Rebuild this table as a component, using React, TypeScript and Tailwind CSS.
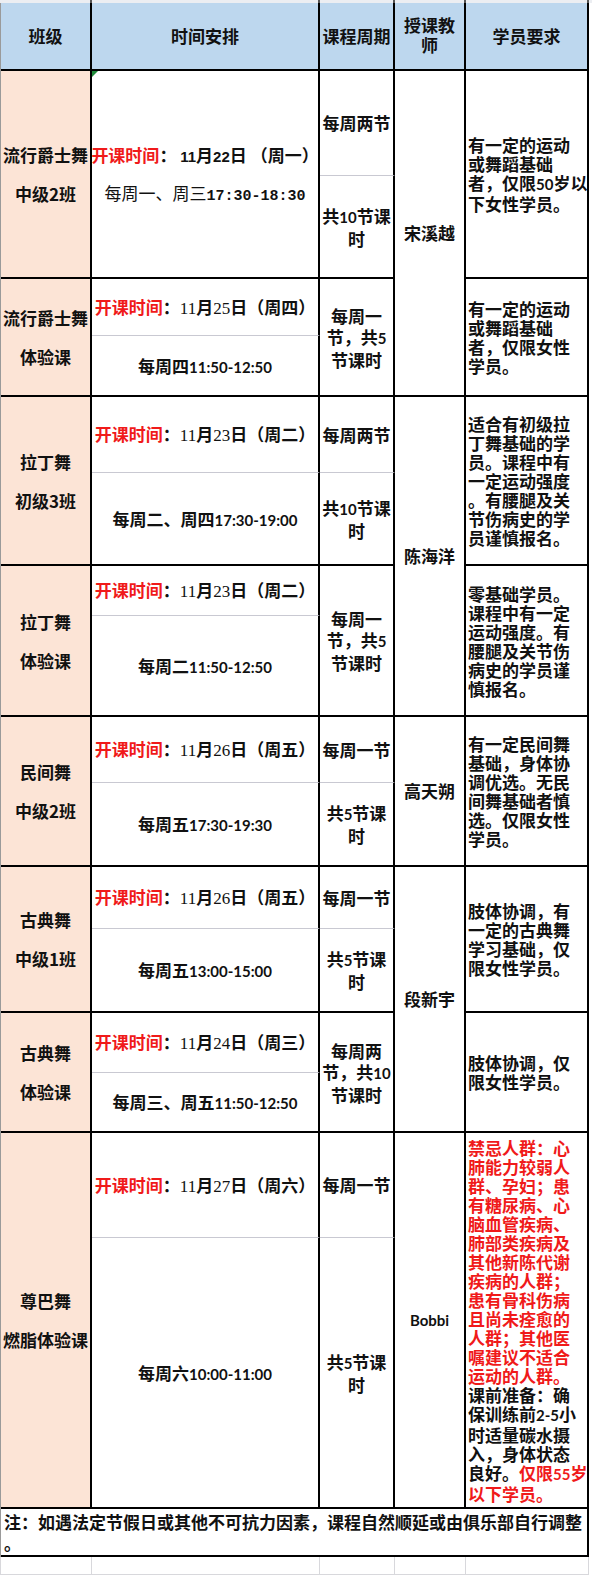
import React from "react";

const CJK = "font-['Noto_Sans_CJK_SC',sans-serif]";

function R({ children }: { children: React.ReactNode }) {
  return <span className="text-[#f01a1a]">{children}</span>;
}

function N({ children }: { children: React.ReactNode }) {
  return <span className="font-['Lato',sans-serif] text-[15px] font-bold">{children}</span>;
}

function S({ children }: { children: React.ReactNode }) {
  return <span className="font-['Liberation_Serif',serif] text-[17px] font-normal">{children}</span>;
}

function M({ children }: { children: React.ReactNode }) {
  return <span className="font-['Liberation_Mono',monospace] text-[15px] font-bold">{children}</span>;
}

function Lines({ lines, className = "" }: { lines: React.ReactNode[]; className?: string }) {
  return (
    <div className={className}>
      {lines.map((l, i) => (
        <div key={i} className="whitespace-nowrap">
          {l}
        </div>
      ))}
    </div>
  );
}

const base = "flex flex-col items-center justify-center text-center border-r-2 border-r-black";
const endRow = "border-b-2 border-b-black";
const subRow = "border-b border-b-[#c9c9d2]";

function ClassCell({ pos, a, b }: { pos: string; a: React.ReactNode; b: React.ReactNode }) {
  return (
    <div className={`${base} ${endRow} ${pos} col-start-1 bg-[#fce4d6] gap-[20px] leading-[19px]`}>
      <div className="whitespace-nowrap">{a}</div>
      <div className="whitespace-nowrap">{b}</div>
    </div>
  );
}

function Start({ date, wk }: { date: React.ReactNode; wk: string }) {
  return (
    <div className="whitespace-nowrap leading-[19px]">
      <R>开课时间</R>：{date}（{wk}）
    </div>
  );
}

function Req({ pos, lines }: { pos: string; lines: React.ReactNode[] }) {
  return (
    <div className={`flex flex-col justify-center items-start text-left pl-[2px] border-r-2 border-r-black ${endRow} ${pos} col-start-5 leading-[19px]`}>
      {lines.map((l, i) => (
        <div key={i} className="whitespace-nowrap">
          {l}
        </div>
      ))}
    </div>
  );
}

export default function App() {
  return (
    <div className={`w-[592px] h-[1575px] bg-white text-[17px] font-bold text-[#111] overflow-hidden ${CJK}`}>
      {/* top strip */}
      <div className="h-[3px] grid grid-cols-[92px_228px_75px_71px_123px] bg-[#eceef2]">
        <div className="border-r-2 border-r-[#555]" />
        <div className="border-r-2 border-r-[#555]" />
        <div className="border-r-2 border-r-[#555]" />
        <div className="border-r-2 border-r-[#555]" />
        <div className="border-r-2 border-r-[#555]" />
      </div>

      <div className="w-[589px] border-l border-l-[#9a9a9a] grid grid-cols-[91px_228px_75px_71px_123px] grid-rows-[68px_105px_103px_57px_61px_76px_93px_50px_101px_66px_84px_62px_84px_60px_60px_105px_271px_48px]">
        {/* header */}
        <div className={`${base} ${endRow} row-start-1 col-start-1 bg-[#bdd7ee]`}>班级</div>
        <div className={`${base} ${endRow} row-start-1 col-start-2 bg-[#bdd7ee]`}>时间安排</div>
        <div className={`${base} ${endRow} row-start-1 col-start-3 bg-[#bdd7ee] whitespace-nowrap`}>课程周期</div>
        <div className={`${base} ${endRow} row-start-1 col-start-4 bg-[#bdd7ee] leading-[20px] pb-[2px]`}>
          <div>授课教</div>
          <div>师</div>
        </div>
        <div className={`${base} ${endRow} row-start-1 col-start-5 bg-[#bdd7ee]`}>学员要求</div>

        {/* class column */}
        <ClassCell pos="row-start-2 row-span-2" a="流行爵士舞" b="中级2班" />
        <ClassCell pos="row-start-4 row-span-2" a="流行爵士舞" b="体验课" />
        <ClassCell pos="row-start-6 row-span-2" a="拉丁舞" b="初级3班" />
        <ClassCell pos="row-start-8 row-span-2" a="拉丁舞" b="体验课" />
        <ClassCell pos="row-start-10 row-span-2" a="民间舞" b="中级2班" />
        <ClassCell pos="row-start-12 row-span-2" a="古典舞" b="中级1班" />
        <ClassCell pos="row-start-14 row-span-2" a="古典舞" b="体验课" />
        <ClassCell pos="row-start-16 row-span-2" a="尊巴舞" b="燃脂体验课" />

        {/* time column */}
        <div className={`${base} ${endRow} row-start-2 row-span-2 col-start-2 relative gap-[17px] leading-[19px]`}>
          <div className="absolute left-0 top-0 w-0 h-0 border-t-[6px] border-t-[#1f8a3a] border-r-[6px] border-r-transparent" />
          <div className="whitespace-nowrap pt-[2px]">
            <R>开课时间</R>： <span className="font-['Liberation_Sans',sans-serif] text-[15px] font-bold">11</span>月<span className="font-['Liberation_Sans',sans-serif] text-[15px] font-bold">22</span>日 （周一）
          </div>
          <div className="whitespace-nowrap font-normal">
            每周一、周三<M>17:30-18:30</M>
          </div>
        </div>

        <div className={`${base} ${subRow} row-start-4 col-start-2`}>
          <Start date={<><S>11</S>月<S>25</S>日</>} wk="周四" />
        </div>
        <div className={`${base} ${endRow} row-start-5 col-start-2`}>
          <div className="whitespace-nowrap">每周四<N>11:50-12:50</N></div>
        </div>

        <div className={`${base} ${subRow} row-start-6 col-start-2`}>
          <Start date={<><S>11</S>月<S>23</S>日</>} wk="周二" />
        </div>
        <div className={`${base} ${endRow} row-start-7 col-start-2`}>
          <div className="whitespace-nowrap">每周二、周四<N>17:30-19:00</N></div>
        </div>

        <div className={`${base} ${subRow} row-start-8 col-start-2`}>
          <Start date={<><S>11</S>月<S>23</S>日</>} wk="周二" />
        </div>
        <div className={`${base} ${endRow} row-start-9 col-start-2`}>
          <div className="whitespace-nowrap">每周二<N>11:50-12:50</N></div>
        </div>

        <div className={`${base} ${subRow} row-start-10 col-start-2`}>
          <Start date={<><S>11</S>月<S>26</S>日</>} wk="周五" />
        </div>
        <div className={`${base} ${endRow} row-start-11 col-start-2`}>
          <div className="whitespace-nowrap">每周五<N>17:30-19:30</N></div>
        </div>

        <div className={`${base} ${subRow} row-start-12 col-start-2`}>
          <Start date={<><S>11</S>月<S>26</S>日</>} wk="周五" />
        </div>
        <div className={`${base} ${endRow} row-start-13 col-start-2`}>
          <div className="whitespace-nowrap">每周五<N>13:00-15:00</N></div>
        </div>

        <div className={`${base} ${subRow} row-start-14 col-start-2`}>
          <Start date={<><S>11</S>月<S>24</S>日</>} wk="周三" />
        </div>
        <div className={`${base} ${endRow} row-start-15 col-start-2`}>
          <div className="whitespace-nowrap">每周三、周五<N>11:50-12:50</N></div>
        </div>

        <div className={`${base} ${subRow} row-start-16 col-start-2`}>
          <Start date={<><S>11</S>月<S>27</S>日</>} wk="周六" />
        </div>
        <div className={`${base} ${endRow} row-start-17 col-start-2`}>
          <div className="whitespace-nowrap">每周六<N>10:00-11:00</N></div>
        </div>

        {/* period column */}
        <div className={`${base} ${subRow} row-start-2 col-start-3`}>每周两节</div>
        <div className={`${base} ${endRow} row-start-3 col-start-3 leading-[21px]`}>
          <Lines lines={[<>共<N>10</N>节课</>, "时"]} />
        </div>
        <div className={`${base} ${endRow} row-start-4 row-span-2 col-start-3 leading-[21px]`}>
          <Lines lines={["每周一", <>节，共<N>5</N></>, "节课时"]} />
        </div>
        <div className={`${base} ${subRow} row-start-6 col-start-3`}>每周两节</div>
        <div className={`${base} ${endRow} row-start-7 col-start-3 leading-[21px]`}>
          <Lines lines={[<>共<N>10</N>节课</>, "时"]} />
        </div>
        <div className={`${base} ${endRow} row-start-8 row-span-2 col-start-3 leading-[21px]`}>
          <Lines lines={["每周一", <>节，共<N>5</N></>, "节课时"]} />
        </div>
        <div className={`${base} ${subRow} row-start-10 col-start-3`}>每周一节</div>
        <div className={`${base} ${endRow} row-start-11 col-start-3 leading-[21px]`}>
          <Lines lines={[<>共<N>5</N>节课</>, "时"]} />
        </div>
        <div className={`${base} ${subRow} row-start-12 col-start-3`}>每周一节</div>
        <div className={`${base} ${endRow} row-start-13 col-start-3 leading-[21px]`}>
          <Lines lines={[<>共<N>5</N>节课</>, "时"]} />
        </div>
        <div className={`${base} ${endRow} row-start-14 row-span-2 col-start-3 leading-[21px]`}>
          <Lines lines={["每周两", <>节，共<N>10</N></>, "节课时"]} />
        </div>
        <div className={`${base} ${subRow} row-start-16 col-start-3`}>每周一节</div>
        <div className={`${base} ${endRow} row-start-17 col-start-3 leading-[21px]`}>
          <Lines lines={[<>共<N>5</N>节课</>, "时"]} />
        </div>

        {/* teacher column */}
        <div className={`${base} ${endRow} row-start-2 row-span-4 col-start-4`}>宋溪越</div>
        <div className={`${base} ${endRow} row-start-6 row-span-4 col-start-4`}>陈海洋</div>
        <div className={`${base} ${endRow} row-start-10 row-span-2 col-start-4`}>高天朔</div>
        <div className={`${base} ${endRow} row-start-12 row-span-4 col-start-4`}>段新宇</div>
        <div className={`${base} ${endRow} row-start-16 row-span-2 col-start-4`}>
          <span className="font-['Lato',sans-serif] text-[15px] font-bold">Bobbi</span>
        </div>

        {/* requirements column */}
        <Req pos="row-start-2 row-span-2" lines={["有一定的运动", "或舞蹈基础", <>者，仅限<N>50</N>岁以</>, "下女性学员。"]} />
        <Req pos="row-start-4 row-span-2" lines={["有一定的运动", "或舞蹈基础", "者，仅限女性", "学员。"]} />
        <Req
          pos="row-start-6 row-span-2"
          lines={["适合有初级拉", "丁舞基础的学", "员。课程中有", "一定运动强度", "。有腰腿及关", "节伤病史的学", "员谨慎报名。"]}
        />
        <Req pos="row-start-8 row-span-2" lines={["零基础学员。", "课程中有一定", "运动强度。有", "腰腿及关节伤", "病史的学员谨", "慎报名。"]} />
        <Req pos="row-start-10 row-span-2" lines={["有一定民间舞", "基础，身体协", "调优选。无民", "间舞基础者慎", "选。仅限女性", "学员。"]} />
        <Req pos="row-start-12 row-span-2" lines={["肢体协调，有", "一定的古典舞", "学习基础，仅", "限女性学员。"]} />
        <Req pos="row-start-14 row-span-2" lines={["肢体协调，仅", "限女性学员。"]} />
        <Req
          pos="row-start-16 row-span-2"
          lines={[
            <R>禁忌人群：心</R>,
            <R>肺能力较弱人</R>,
            <R>群、孕妇；患</R>,
            <R>有糖尿病、心</R>,
            <R>脑血管疾病、</R>,
            <R>肺部类疾病及</R>,
            <R>其他新陈代谢</R>,
            <R>疾病的人群；</R>,
            <R>患有骨科伤病</R>,
            <R>且尚未痊愈的</R>,
            <R>人群；其他医</R>,
            <R>嘱建议不适合</R>,
            <R>运动的人群。</R>,
            "课前准备：确",
            <>保训练前<N>2-5</N>小</>,
            "时适量碳水摄",
            "入，身体状态",
            <>良好。<R>仅限<N>55</N>岁</R></>,
            <R>以下学员。</R>,
          ]}
        />

        {/* footer */}
        <div className={`row-start-18 col-start-1 col-span-5 flex flex-col justify-center items-start text-left pl-[3px] leading-[21px] border-r-2 border-r-black ${endRow}`}>
          <div className="whitespace-nowrap">注：如遇法定节假日或其他不可抗力因素，课程自然顺延或由俱乐部自行调整</div>
          <div>。</div>
        </div>
      </div>

      {/* bottom strip */}
      <div className="h-[18px] grid grid-cols-[92px_228px_75px_71px_123px]">
        <div className="border-r border-r-[#d8d8dc] border-b border-b-[#d8d8dc] border-l border-l-[#d8d8dc]" />
        <div className="border-r border-r-[#d8d8dc] border-b border-b-[#d8d8dc]" />
        <div className="border-r border-r-[#d8d8dc] border-b border-b-[#d8d8dc]" />
        <div className="border-r border-r-[#d8d8dc] border-b border-b-[#d8d8dc]" />
        <div className="border-r border-r-[#d8d8dc] border-b border-b-[#d8d8dc]" />
      </div>
    </div>
  );
}
